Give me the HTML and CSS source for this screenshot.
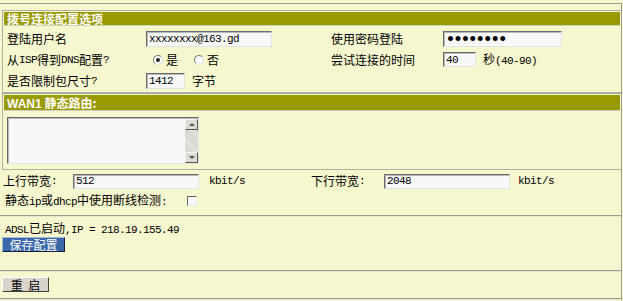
FILE: index.html
```html
<!DOCTYPE html>
<html lang="zh-CN">
<head>
<meta charset="utf-8">
<title>拨号连接配置</title>
<link rel="stylesheet" href="styles.css">
</head>
<body>
<div class="page">
  <section class="box">
    <div class="hd">拨号连接配置选项</div>
    <div class="cfg">
      <div class="cell lbl">登陆用户名</div>
      <div class="cell"><input class="txt w-user" type="text" value="xxxxxxxx@163.gd"></div>
      <div class="cell lbl">使用密码登陆</div>
      <div class="cell"><input class="txt w-pass" type="password" value="abcdefgh"></div>

      <div class="cell lbl">从<span class="m">ISP</span>得到<span class="m">DNS</span>配置<span class="m">?</span></div>
      <div class="cell radios">
        <span class="radio on"></span><span class="opt">是</span>
        <span class="radio"></span><span class="opt">否</span>
      </div>
      <div class="cell lbl">尝试连接的时间</div>
      <div class="cell"><input class="txt w-sec" type="text" value="40"><span class="unit">秒<span class="m">(40-90)</span></span></div>

      <div class="cell lbl">是否限制包尺寸<span class="m">?</span></div>
      <div class="cell"><input class="txt w-mtu" type="text" value="1412"><span class="unit">字节</span></div>
      <div class="cell"></div>
      <div class="cell"></div>
    </div>
  </section>

  <section class="box box2">
    <div class="hd"><span class="latin">WAN1</span> 静态路由:</div>
    <div class="route">
      <div class="ta">
        <textarea class="ta-field"></textarea>
        <div class="sb">
          <div class="sb-btn"><span class="arr up"></span></div>
          <div class="sb-track"></div>
          <div class="sb-btn"><span class="arr down"></span></div>
        </div>
      </div>
    </div>
  </section>

  <div class="bw">
    <div class="cell lbl">上行带宽<span class="m">:</span></div>
    <div class="cell"><input class="txt w-bw" type="text" value="512"></div>
    <div class="cell m">kbit/s</div>
    <div class="cell lbl">下行带宽<span class="m">:</span></div>
    <div class="cell"><input class="txt w-bw" type="text" value="2048"></div>
    <div class="cell m">kbit/s</div>
  </div>
  <div class="chkrow">
    <span class="lbl">静态<span class="m">ip</span>或<span class="m">dhcp</span>中使用断线检测<span class="m">:</span></span>
    <span class="chk"></span>
  </div>

  <div class="rule"></div>
  <div class="status">
    <div class="msg"><span class="m">ADSL</span>已启动<span class="m">,IP = 218.19.155.49</span></div>
    <button class="btn btn-save" type="button">保存配置</button>
  </div>
  <div class="rule"></div>
  <div class="restart">
    <button class="btn btn-reboot" type="button">重&nbsp;&nbsp;启</button>
  </div>
  <div class="rule"></div>
</div>
</body>
</html>
```

FILE: styles.css
```css
html, body {
  margin: 0;
  padding: 0;
  background: #f6f6cf;
}
body {
  font-family: "Noto Sans CJK SC", "Liberation Sans", sans-serif;
  font-size: 12px;
  color: #000;
  line-height: 14px;
}
.page {
  margin-top: 3px;
  width: 622px;
  box-sizing: border-box;
  border-top: 1px solid #9c9c94;
  border-right: 1px solid #9c9c94;
  padding-top: 6px;
}
.m {
  font-family: "Liberation Mono", monospace;
  font-size: 11px;
  letter-spacing: -0.6px;
}
.box {
  margin-left: 2px;
  border: 1px solid #b0b0a4;
  border-right: none;
  padding: 1px;
}
.box2 {
  border-top-color: #a4a49c;
}
.hd {
  height: 13px;
  line-height: 13px;
  background: #999900;
  color: #fff;
  font-weight: bold;
  padding-left: 3px;
  border-bottom: 1px solid #d0d0c0;
}
.box2 .hd {
  height: 15px;
  line-height: 15px;
}
.latin {
  font-family: "Liberation Sans", sans-serif;
}
.cfg {
  display: grid;
  grid-template-columns: 139px 185px 112px 1fr;
  grid-auto-rows: 21px;
  padding-top: 2px;
}
.cell {
  display: flex;
  align-items: center;
  padding-left: 3px;
  white-space: nowrap;
}
.txt {
  box-sizing: border-box;
  height: 16px;
  margin: 0;
  padding: 0 2px;
  border: 1px solid;
  border-color: #6a6a6a #e4e4e4 #e4e4e4 #6a6a6a;
  box-shadow: inset 1px 1px 0 #b8b8b8;
  background: #f8f8f8;
  font-family: "Liberation Mono", monospace;
  font-size: 11px;
  letter-spacing: -0.6px;
  color: #000;
  outline: none;
}
.w-user { width: 126px; }
.w-pass {
  width: 119px;
  font-family: "DejaVu Sans", sans-serif;
  font-size: 14px;
  letter-spacing: -1.5px;
  font-weight: bold;
}
.w-sec { width: 33px; height: 15px; }
.w-mtu { width: 39px; }
.w-bw { width: 126px; height: 15px; }
.unit {
  margin-left: 7px;
}
.radios {
  padding-left: 10px;
}
.radio {
  box-sizing: border-box;
  width: 10px;
  height: 10px;
  border-radius: 50%;
  border: 1px solid;
  border-color: #7a7a7a #e0e0e0 #e0e0e0 #7a7a7a;
  background: #fafafa;
  position: relative;
}
.radio.on::after {
  content: "";
  position: absolute;
  left: 2px;
  top: 2px;
  width: 4px;
  height: 4px;
  border-radius: 50%;
  background: #222;
}
.opt {
  margin-left: 3px;
  margin-right: 16px;
}
.route {
  padding: 6px 0 4px 3px;
}
.ta {
  display: flex;
  width: 192px;
  height: 47px;
  box-sizing: border-box;
  border: 1px solid;
  border-color: #6a6a6a #e4e4e4 #e4e4e4 #6a6a6a;
  box-shadow: inset 1px 1px 0 #b8b8b8;
  background: #f8f8f8;
}
.ta-field {
  flex: 1;
  border: none;
  background: transparent;
  resize: none;
  margin: 0;
  padding: 0;
  outline: none;
}
.sb {
  width: 13px;
  display: flex;
  flex-direction: column;
  margin: 1px 0 0 0;
}
.sb-btn {
  height: 11px;
  box-sizing: border-box;
  background: #dcdcd4;
  border: 1px solid;
  border-color: #f4f4f0 #555 #555 #f4f4f0;
  display: flex;
  align-items: center;
  justify-content: center;
}
.sb-track {
  flex: 1;
  background-color: #e8e8e4;
  background-image: repeating-linear-gradient(45deg, #d0d0cc 0 1px, transparent 1px 2px);
}
.arr {
  width: 0;
  height: 0;
  border-left: 3px solid transparent;
  border-right: 3px solid transparent;
}
.arr.up { border-bottom: 3px solid #555; }
.arr.down { border-top: 3px solid #555; }
.bw {
  display: grid;
  grid-template-columns: 70px 133px 105px 73px 131px 1fr;
  height: 20px;
  margin-top: 1px;
}
.bw .cell.m {
  padding-left: 6px;
}
.chkrow {
  display: flex;
  align-items: center;
  height: 20px;
  padding-left: 5px;
}
.chk {
  box-sizing: border-box;
  width: 10px;
  height: 10px;
  margin-left: 20px;
  border: 1px solid;
  border-color: #6a6a6a #e8e8e8 #e8e8e8 #6a6a6a;
  background: #f8f8f8;
}
.rule {
  border-top: 1px solid #9c9c94;
  border-bottom: 1px solid #e6e6d0;
}
.chkrow + .rule {
  margin-top: 4px;
}
.status {
  padding: 4px 0 18px 2px;
}
.msg {
  padding-left: 3px;
  height: 14px;
  line-height: 14px;
}
.btn {
  display: block;
  box-sizing: border-box;
  margin: 0;
  padding: 0;
  font-family: "Noto Sans CJK SC", sans-serif;
  font-size: 12px;
  line-height: 12px;
  cursor: default;
}
.btn-save {
  width: 63px;
  height: 15px;
  margin-top: 2px;
  background: #3a68a8;
  color: #fff;
  border: 1px solid;
  border-color: #a0b8dc #10203c #10203c #a0b8dc;
}
.restart {
  padding: 5px 0 6px 2px;
}
.btn-reboot {
  width: 47px;
  height: 15px;
  background: #d8d4cc;
  color: #000;
  border: 1px solid;
  border-color: #ffffff #404040 #404040 #ffffff;
}
```
